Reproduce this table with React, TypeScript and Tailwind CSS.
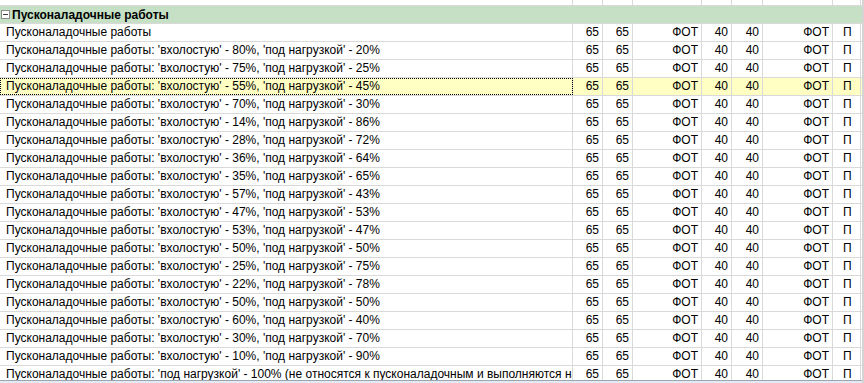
import React from 'react';

const PCTS: [number, number][] = [
  [80, 20], [75, 25], [55, 45], [70, 30], [14, 86], [28, 72], [36, 64], [35, 65],
  [57, 43], [47, 53], [53, 47], [50, 50], [25, 75], [22, 78], [50, 50], [60, 40],
  [30, 70], [10, 90],
];

const ROWS: string[] = [
  'Пусконаладочные работы',
  ...PCTS.map(([a, b]) => `Пусконаладочные работы: 'вхолостую' - ${a}%, 'под нагрузкой' - ${b}%`),
  "Пусконаладочные работы: 'под нагрузкой' - 100% (не относятся к пусконаладочным и выполняются на",
];

const FOCUSED = 3;

function DataRow({ name, focused }: { name: string; focused?: boolean }) {
  return (
    <div
      className={`flex h-[18px] border-b border-[#d9d9d9] ${focused ? 'bg-[#ffffc4]' : 'bg-white'}`}
    >
      <div
        className={`w-[573px] shrink-0 border-r border-[#d9d9d9] pl-[6px] leading-[17px] whitespace-nowrap overflow-hidden ${
          focused ? 'outline outline-1 outline-dotted outline-black -outline-offset-1' : ''
        }`}
      >
        {name}
      </div>
      <div className="w-[30px] shrink-0 border-r border-[#d9d9d9] pr-[3px] text-right leading-[17px]">65</div>
      <div className="w-[30px] shrink-0 border-r border-[#d9d9d9] pr-[3px] text-right leading-[17px]">65</div>
      <div className="w-[69px] shrink-0 border-r border-[#d9d9d9] pr-[3px] text-right leading-[17px]">ФОТ</div>
      <div className="w-[30px] shrink-0 border-r border-[#d9d9d9] pr-[3px] text-right leading-[17px]">40</div>
      <div className="w-[31px] shrink-0 border-r border-[#d9d9d9] pr-[3px] text-right leading-[17px]">40</div>
      <div className="w-[70px] shrink-0 border-r border-[#d9d9d9] pr-[3px] text-right leading-[17px]">ФОТ</div>
      <div className="w-[28px] shrink-0 border-r border-[#d9d9d9] pl-[10px] leading-[17px]">П</div>
    </div>
  );
}

export default function App() {
  return (
    <div
      className="flex h-[383px] w-[864px] overflow-hidden bg-white text-[12px] text-black"
      style={{ fontFamily: '"Liberation Sans", Arial, sans-serif' }}
    >
      <div className="flex w-[862px] flex-col">
        <div className="h-[380px] overflow-hidden">
          {/* partially scrolled-off row */}
          <div className="h-[6px] overflow-hidden">
            <div className="-mt-[12px]">
              <DataRow name="" />
            </div>
          </div>
          {/* group header */}
          <div className="flex h-[18px] items-center border-b border-[#d9d9d9] bg-[#c6e0c6]">
            <div className="ml-[1px] flex h-[9px] w-[9px] items-center justify-center border border-[#8c8c8c] bg-white">
              <div className="h-px w-[5px] bg-[#404040]" />
            </div>
            <span className="ml-[2px] font-bold">Пусконаладочные работы</span>
          </div>
          {ROWS.map((name, i) => (
            <DataRow key={i} name={name} focused={i === FOCUSED} />
          ))}
        </div>
        <div className="h-[3px] border-t border-[#9aa6b4] bg-[#e4eaf2]" />
      </div>
      <div className="w-[2px] bg-[#d4d4d4]" />
    </div>
  );
}
